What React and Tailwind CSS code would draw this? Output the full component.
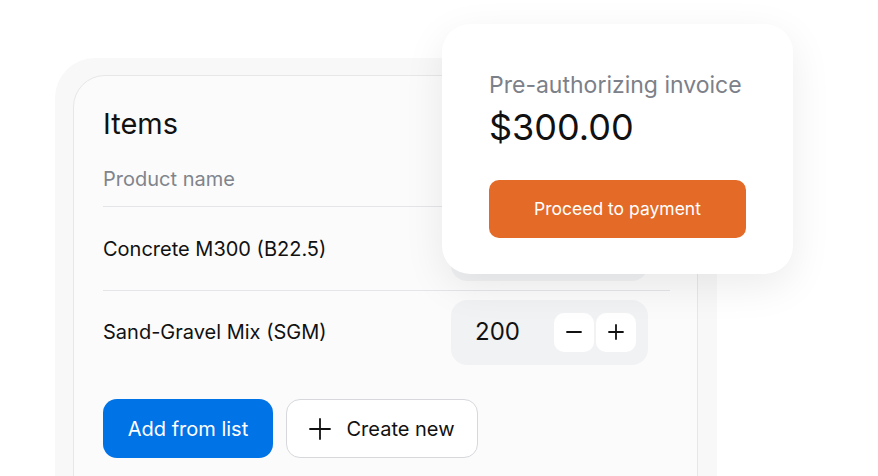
import React from "react";

function QtyBox({ value }) {
  return (
    <div className="flex h-[65px] w-[197px] items-center rounded-[16px] bg-[#f1f2f4] pl-[24px] pr-[12px]">
      <span className="flex-1 text-[24px] text-[#111111]">{value}</span>
      <div className="flex gap-[2px]">
        <button className="flex h-[39px] w-[40px] items-center justify-center rounded-[10px] bg-white">
          <svg width="20" height="20" viewBox="0 0 20 20" fill="none" stroke="#111111" strokeWidth="1.8" strokeLinecap="round">
            <path d="M3 10h14" />
          </svg>
        </button>
        <button className="flex h-[39px] w-[40px] items-center justify-center rounded-[10px] bg-white">
          <svg width="20" height="20" viewBox="0 0 20 20" fill="none" stroke="#111111" strokeWidth="1.8" strokeLinecap="round">
            <path d="M3 10h14M10 3v14" />
          </svg>
        </button>
      </div>
    </div>
  );
}

function Row({ name, value, border }) {
  return (
    <div className={`flex h-[83px] items-center justify-between ${border ? "border-t border-[#e3e5e8]" : ""}`}>
      <span className="text-[20px] text-[#111111]">{name}</span>
      <div className="mr-[22px]">
        <QtyBox value={value} />
      </div>
    </div>
  );
}

export default function App() {
  return (
    <div
      className="relative h-[476px] w-[878px] overflow-hidden bg-white"
      style={{ fontFamily: "Inter, 'Noto Sans', sans-serif" }}
    >
      <div className="pl-[55px] pt-[58px]">
        <div className="h-[460px] w-[662px] rounded-[40px] bg-[#f8f8f8] pl-[18px] pt-[17px] pr-[19px]">
          <div className="h-[440px] rounded-[32px] border border-[#e6e7e9] bg-[#fbfbfb] pl-[29px] pr-[27px] pt-[28px]">
            <h2 className="text-[29px] leading-[40px] text-[#111111]">Items</h2>
            <div className="mt-[22px] pb-[14px] text-[20px] leading-[26px] text-[#80848c]">Product name</div>
            <div className="border-t border-[#e3e5e8]">
              <Row name="Concrete M300 (B22.5)" value="100" />
              <Row name="Sand-Gravel Mix (SGM)" value="200" border />
            </div>
            <div className="mt-[26px] flex gap-[13px]">
              <button className="h-[59px] w-[170px] rounded-[14px] bg-[#0073e6] text-[20px] text-white">
                Add from list
              </button>
              <button className="flex h-[59px] w-[192px] items-center justify-center gap-[15px] rounded-[14px] border border-[#d6d8dc] bg-white text-[20px] text-[#111111]">
                <svg width="22" height="22" viewBox="0 0 22 22" fill="none" stroke="#111111" strokeWidth="1.8" strokeLinecap="round">
                  <path d="M1 11h20M11 1v20" />
                </svg>
                Create new
              </button>
            </div>
          </div>
        </div>
      </div>

      <div className="absolute left-[442px] top-[24px] h-[250px] w-[351px] rounded-[28px] bg-white pl-[47px] pt-[45px] shadow-[0_12px_40px_rgba(0,0,0,0.08)]">
        <div className="text-[23px] leading-[32px] text-[#7c8088]">Pre-authorizing invoice</div>
        <div className="mt-[3px] text-[36px] leading-[46px] text-[#111111]">$300.00</div>
        <button className="mt-[30px] h-[58px] w-[257px] rounded-[10px] bg-[#e46a28] text-[17.5px] text-white">
          Proceed to payment
        </button>
      </div>
    </div>
  );
}
